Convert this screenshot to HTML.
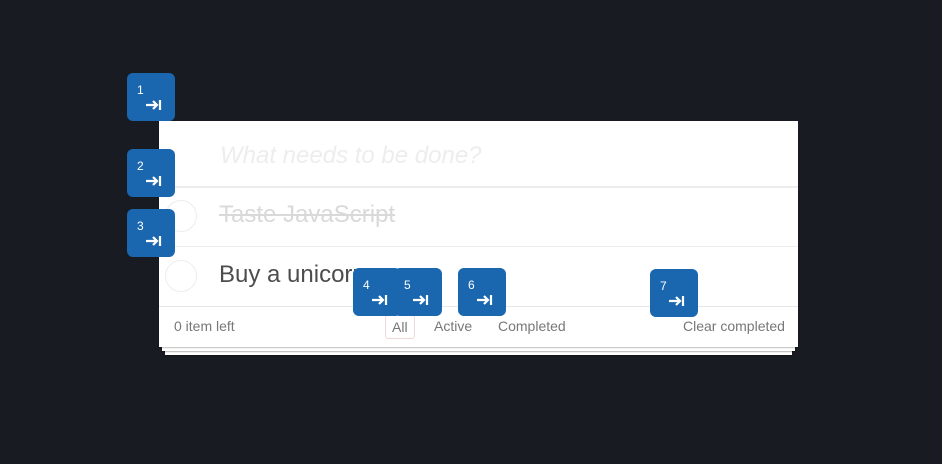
<!DOCTYPE html>
<html><head><meta charset="utf-8"><style>
*{box-sizing:border-box;margin:0;padding:0}
body{width:942px;height:464px;background:#181b22;position:relative;overflow:hidden;font-family:"Liberation Sans",sans-serif}
.p{position:absolute;background:#fff}
.b{position:absolute;width:48px;height:48px;background:#1a67b0;border-radius:6px;color:#fff}
.b span{position:absolute;left:10px;top:10px;font-size:12px}
.b svg{position:absolute;left:18px;top:25px}
.c{position:absolute;left:165px;width:32px;height:32px;border:1px solid #ededed;border-radius:50%}
.line{position:absolute;left:159px;width:639px;height:1px;background:#e6e6e6}
.t{position:absolute;font-size:14px;color:#777}
</style></head><body>
<div class="p" style="left:165px;top:300px;width:627px;height:55px;box-shadow:0 1px 1px rgba(0,0,0,.3)"></div>
<div class="p" style="left:162px;top:300px;width:633px;height:51px;box-shadow:0 1px 1px rgba(0,0,0,.3)"></div>
<div class="p" style="left:159px;top:121px;width:639px;height:226px;box-shadow:0 1px 1px rgba(0,0,0,.25)"></div>
<div style="position:absolute;left:220px;top:142px;font-size:24px;font-style:italic;color:#ededed">What needs to be done?</div>
<div class="line" style="top:186px;height:2px;background:#ededed"></div>
<div class="c" style="top:200px"></div>
<div style="position:absolute;left:219px;top:201px;font-size:24px;color:#d9d9d9;text-decoration:line-through">Taste JavaScript</div>
<div class="line" style="top:246px;background:#ededed"></div>
<div class="c" style="top:260px"></div>
<div style="position:absolute;left:219px;top:261px;font-size:24px;color:#4d4d4d">Buy a unicorn</div>
<div class="line" style="top:306px"></div>
<div class="t" style="left:174px;top:318px">0 item left</div>
<div class="t" style="left:385px;top:315px;border:1px solid #efd7d7;border-radius:3px;padding:3px 6px">All</div>
<div class="t" style="left:434px;top:318px">Active</div>
<div class="t" style="left:498px;top:318px">Completed</div>
<div class="t" style="left:683px;top:318px">Clear completed</div>
<div class="b" style="left:127px;top:73px"><span>1</span><svg width="18" height="14" viewBox="0 0 18 14"><path d="M1 7H12M8 3l4 4-4 4M15 2v10" stroke="#fff" stroke-width="2.2" fill="none"/></svg></div>
<div class="b" style="left:127px;top:149px"><span>2</span><svg width="18" height="14" viewBox="0 0 18 14"><path d="M1 7H12M8 3l4 4-4 4M15 2v10" stroke="#fff" stroke-width="2.2" fill="none"/></svg></div>
<div class="b" style="left:127px;top:209px"><span>3</span><svg width="18" height="14" viewBox="0 0 18 14"><path d="M1 7H12M8 3l4 4-4 4M15 2v10" stroke="#fff" stroke-width="2.2" fill="none"/></svg></div>
<div class="b" style="left:353px;top:268px"><span>4</span><svg width="18" height="14" viewBox="0 0 18 14"><path d="M1 7H12M8 3l4 4-4 4M15 2v10" stroke="#fff" stroke-width="2.2" fill="none"/></svg></div>
<div class="b" style="left:394px;top:268px"><span>5</span><svg width="18" height="14" viewBox="0 0 18 14"><path d="M1 7H12M8 3l4 4-4 4M15 2v10" stroke="#fff" stroke-width="2.2" fill="none"/></svg></div>
<div class="b" style="left:458px;top:268px"><span>6</span><svg width="18" height="14" viewBox="0 0 18 14"><path d="M1 7H12M8 3l4 4-4 4M15 2v10" stroke="#fff" stroke-width="2.2" fill="none"/></svg></div>
<div class="b" style="left:650px;top:269px"><span>7</span><svg width="18" height="14" viewBox="0 0 18 14"><path d="M1 7H12M8 3l4 4-4 4M15 2v10" stroke="#fff" stroke-width="2.2" fill="none"/></svg></div>
</body></html>
